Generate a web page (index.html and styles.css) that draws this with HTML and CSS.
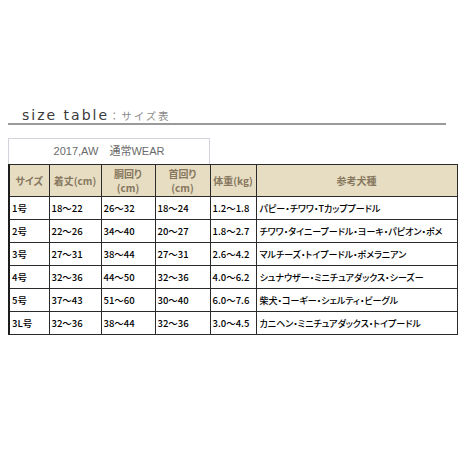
FILE: index.html
```html
<!DOCTYPE html>
<html lang="ja">
<head>
<meta charset="utf-8">
<link rel="stylesheet" href="styles.css">
</head>
<body>
<div class="page">
  <div class="title"><span class="title-en">size table</span><span class="title-ja">：サイズ表</span></div>
  <div class="season">2017,AW　通常WEAR</div>
  <table class="sizes">
    <colgroup>
      <col class="c1"><col class="c2"><col class="c3"><col class="c4"><col class="c5"><col class="c6">
    </colgroup>
    <thead>
      <tr>
        <th>サイズ</th>
        <th>着丈(cm)</th>
        <th>胴回り<br>(cm)</th>
        <th>首回り<br>(cm)</th>
        <th>体重(kg)</th>
        <th>参考犬種</th>
      </tr>
    </thead>
    <tbody>
      <tr><td>1号</td><td>18～22</td><td>26～32</td><td>18～24</td><td>1.2～1.8</td><td>パピー・チワワ・Tカッププードル</td></tr>
      <tr><td>2号</td><td>22～26</td><td>34～40</td><td>20～27</td><td>1.8～2.7</td><td>チワワ・タイニープードル・ヨーキ・パピオン・ポメ</td></tr>
      <tr><td>3号</td><td>27～31</td><td>38～44</td><td>27～31</td><td>2.6～4.2</td><td>マルチーズ・トイプードル・ポメラニアン</td></tr>
      <tr><td>4号</td><td>32～36</td><td>44～50</td><td>32～36</td><td>4.0～6.2</td><td>シュナウザー・ミニチュアダックス・シーズー</td></tr>
      <tr><td>5号</td><td>37～43</td><td>51～60</td><td>30～40</td><td>6.0～7.6</td><td>柴犬・コーギー・シェルティ・ビーグル</td></tr>
      <tr><td>3L号</td><td>32～36</td><td>38～44</td><td>32～36</td><td>3.0～4.5</td><td>カニヘン・ミニチュアダックス・トイプードル</td></tr>
    </tbody>
  </table>
</div>
</body>
</html>
```

FILE: styles.css
```css
html, body {
  margin: 0;
  padding: 0;
  background: #ffffff;
}

.page {
  padding: 106px 0 0 8px;
  width: 448px;
  font-family: "Liberation Sans", "Noto Sans CJK JP", sans-serif;
}

.title {
  width: 424px;
  padding-left: 14px;
  height: 17px;
  border-bottom: 2px solid #9a9a9a;
  line-height: 17px;
  white-space: nowrap;
}

.title-en {
  font-family: "DejaVu Sans", sans-serif;
  font-size: 14px;
  letter-spacing: 2px;
  color: #3a3a3a;
}

.title-ja {
  font-family: "Noto Sans CJK JP", sans-serif;
  font-size: 10.5px;
  color: #8a8a8a;
  letter-spacing: 1.8px;
}

.season {
  margin-top: 13px;
  width: 200px;
  height: 25px;
  border: 1px solid #d4d4dc;
  border-bottom: none;
  text-align: center;
  line-height: 25px;
  font-size: 11px;
  color: #6a6a6a;
  font-family: "Liberation Sans", "Noto Sans CJK JP", sans-serif;
}

.sizes {
  border-collapse: collapse;
  width: 448px;
  table-layout: fixed;
  border: 1px solid #1e1e1e;
  border-left: 2px solid #1e1e1e;
  font-family: "Liberation Sans", "Noto Sans CJK JP", sans-serif;
}

.c1 { width: 40px; }
.c2 { width: 52px; }
.c3 { width: 54px; }
.c4 { width: 55px; }
.c5 { width: 46px; }
.c6 { width: 201px; }

.sizes th {
  background: #e6ddc3;
  color: #86775e;
  font-size: 10px;
  font-weight: bold;
  height: 31px;
  padding: 0;
  line-height: 14px;
  text-align: center;
  border: 1px solid #2a2a2a;
  font-family: "Noto Sans CJK JP", sans-serif;
  font-feature-settings: "palt";
}

.sizes td {
  height: 22px;
  padding: 0 0 0 2px;
  font-size: 9.5px;
  color: #000000;
  border: 1px solid #2a2a2a;
  white-space: nowrap;
  overflow: hidden;
  font-family: "Noto Sans CJK JP", sans-serif;
  font-weight: 500;
  font-feature-settings: "palt";
}

.sizes td:last-child {
  padding-left: 3px;
  font-size: 9px;
}
```
